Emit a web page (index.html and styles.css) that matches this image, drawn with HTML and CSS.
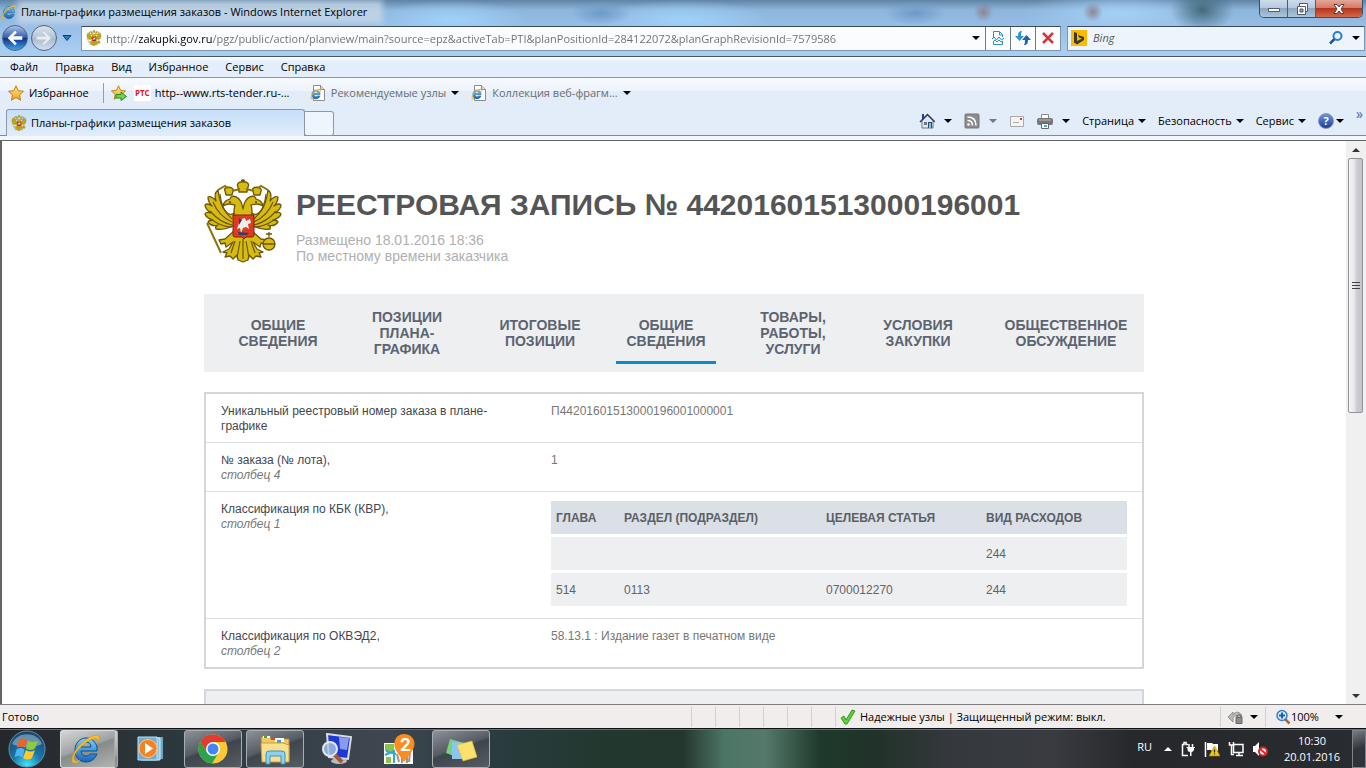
FILE: index.html
```html
<!DOCTYPE html>
<html lang="ru">
<head>
    <meta charset="UTF-8">
    <meta name="viewport" content="width=device-width, initial-scale=1.0">
    <title>Планы-графики размещения заказов</title>
    <link rel="stylesheet" href="styles.css">
</head>
<body>
    <svg class="sprite" aria-hidden="true">
        <defs>
            <linearGradient id="gold" x1="0" y1="0" x2="0" y2="1">
                <stop offset="0" stop-color="#ffe98a"/><stop offset="1" stop-color="#f0a11c"/>
            </linearGradient>
            <linearGradient id="blue" x1="0" y1="0" x2="0" y2="1">
                <stop offset="0" stop-color="#7fd0f7"/><stop offset="1" stop-color="#1565b8"/>
            </linearGradient>
            <symbol id="ie" viewBox="0 0 32 32">
                <path d="M27 18H11c0 3 2 5 5 5 2 0 3-1 4-2h7c-2 5-6 8-11 8C9 29 5 24 5 17S10 5 16 5s12 5 11 13zM11 14h10c0-3-2-5-5-5s-5 2-5 5z" fill="url(#blue)" stroke="#0d4c92" stroke-width="1"/>
                <path d="M6 30C-2 31 3 18 12 10S31-1 29 7c0 1-1 3-2 4 2-5 0-7-4-5C13 9 2 22 4 27c1 2 4 1 6 0-1 1-2 3-4 3z" fill="#fbc02d" stroke="#d9920c" stroke-width=".6"/>
            </symbol>
            <symbol id="ie-page" viewBox="0 0 16 16">
                <path d="M3.500.5h7l4 4v11h-11z" fill="#fff" stroke="#8c8c8c"/>
                <path d="M10.500.5v4h4" fill="#ddd" stroke="#8c8c8c"/>
                <use href="#ie" x="0" y="3" width="12" height="12"/>
            </symbol>
            <symbol id="eagle" viewBox="0 0 78 84">
                <g fill="#d8bb10" stroke="#6b5708" stroke-width="1.300" stroke-linejoin="round">
                    <path d="M30 34C25 38 17 33 14 11c-4 3-3 8-2 11-4-5-6-5-8-4 0 4 2 7 4 9-4-3-6-2-7-1 0 4 3 6 6 8-3-1-5-1-6 1 1 4 5 5 8 6-3 0-4 0-5 2 3 4 7 4 10 3-2 1-3 2-2 4 6 1 14-1 20-5z"/>
                    <path d="M48 34c5 4 13-1 16-23 4 3 3 8 2 11 4-5 6-5 8-4 0 4-2 7-4 9 4-3 6-2 7-1 0 4-3 6-6 8 3-1 5-1 6 1-1 4-5 5-8 6 3 0 4 0 5 2-3 4-7 4-10 3 2 1 3 2 2 4-6 1-14-1-20-5z"/>
                    <path d="M31 39c-2-7-1-10 0-13-4-1-7-2-12 1 1-5 4-6 7-7 1-5 11-4 13 10 2-14 12-15 13-10 3 1 6 2 7 7-5-3-8-2-12-1 1 3 2 6 0 13z"/>
                    <path d="M30 52l-9 8-6 1 2 4 4-1 1 4 7-5-4 7-6 3 4 1-2 4 5-1 3 3 4-4 1 5 5 2 5-2 1-5 4 4 3-3 5 1-2-4 4-1-6-3-4-7 7 5 1-4 4 1 2-4-6-1-9-8z"/>
                    <path d="M34 8c-4-7 14-7 10 0l-1 5h-8zM21 12c-3-5 10-5 8 0l-1 4h-6zM49 12c-3-5 10-5 8 0l-1 4h-6z"/>
                    <circle cx="65" cy="65" r="6"/>
                    <path d="M59 65h12M65 58v-5M62 55h6M39 3V0M37 1.500h4"/>
                </g>
                <path d="M3 44l14 30M14 11l7-4 3 2M64 11l-7-4-3 2M36 10l-8 2M42 10l8 2" fill="none" stroke="#8d7514" stroke-width="2"/>
                <path d="M16 15c1 12 5 19 12 25M9 23c4 10 10 16 19 20M6 32c6 7 13 12 22 14M8 41c6 4 12 7 20 7M62 15c-1 12-5 19-12 25M69 23c-4 10-10 16-19 20M72 32c-6 7-13 12-22 14M70 41c-6 4-12 7-20 7M31 62l-4 12M36 62l-3 17M42 62l3 17M47 62l4 12M39 60v20" fill="none" stroke="#6b5708" stroke-width="1.200"/>
                <path d="M29 36h21v20q0 2-2 2h-6l-2 2-2-2h-7q-2 0-2-2z" fill="#df3b22" stroke="#7e2211"/>
                <path d="M33 50l2-6 3-4 3-1 1 3 4-2 1 4-3 1 1 5-3-2-3 1-2 5-1-5z" fill="#eee"/>
                <path d="M34 53l11 1-2 2h-8zM35 39l3 2-3 5z" fill="#27445c"/>
                <circle cx="26" cy="23" r="1" fill="#4b3b02"/><circle cx="52" cy="23" r="1" fill="#4b3b02"/>
            </symbol>
            <symbol id="star" viewBox="0 0 16 16">
                <path d="M8 .8l2.200 4.900 5.300.6-4 3.600 1.100 5.300L8 12.500l-4.600 2.700 1.100-5.300-4-3.600 5.300-.6z" fill="url(#gold)" stroke="#c67c10"/>
            </symbol>
        </defs>
    </svg>

    <header class="browser">
        <div class="titlebar">
            <svg class="icon"><use href="#ie"/></svg>
            <span class="window-title">Планы-графики размещения заказов - Windows Internet Explorer</span>
            <div class="window-buttons">
                <button aria-label="Свернуть"><svg viewBox="0 0 14 12"><path d="M1.500 5.500h11v3h-11z" fill="#fff" stroke="#4d5c6e"/></svg></button>
                <button aria-label="Восстановить"><svg viewBox="0 0 14 12"><path d="M4.500.5h8v8h-2v3h-8v-8h2z" fill="#fff" stroke="#4d5c6e"/><path d="M5 6h3v3H5z" fill="#8ba1b8" stroke="#4d5c6e"/><path d="M4.500 3.500h6v5" fill="none" stroke="#4d5c6e"/></svg></button>
                <button class="close" aria-label="Закрыть"><svg viewBox="0 0 14 12"><path d="M2 1.500h3l2 2.500 2-2.500h3L9 6l3 4.500H9L7 8l-2 2.500H2L5 6z" fill="#fff" stroke="#5b3a3a"/></svg></button>
            </div>
        </div>

        <div class="address-row">
            <button class="nav-btn back" aria-label="Назад"><svg viewBox="0 0 24 24"><path d="M4 12l8-8 2 2-4 4h10v4H10l4 4-2 2z" fill="#fff"/></svg></button>
            <button class="nav-btn forward" aria-label="Вперед"><svg viewBox="0 0 24 24"><path d="M20 12l-8-8-2 2 4 4H4v4h10l-4 4 2 2z" fill="#e8eef4" stroke="#c3cdd7"/></svg></button>
            <button class="history" aria-label="Последние страницы"><svg viewBox="0 0 10 6"><path d="M1 .5h8l-4 5z" fill="#2a7fc0" stroke="#123e74"/></svg></button>
            <div class="address">
                <svg class="icon"><use href="#eagle"/></svg>
                <input class="url" type="text" aria-label="Адрес" value="http://zakupki.gov.ru/pgz/public/action/planview/main?source=epz&amp;activeTab=PTI&amp;planPositionId=284122072&amp;planGraphRevisionId=7579586">
                <button class="drop" aria-label="Список адресов"><i class="caret"></i></button>
                <button class="cell" aria-label="Режим совместимости"><svg class="icon" viewBox="0 0 16 16"><path d="M3.500 7V1.500h6l3 3V7M3.500 11v3.500h9V11M9.500 2v3h3" fill="none" stroke="#2a91c4"/><path d="M2 9l2-2 2.500 3L9 7l2.500 3L14 8M3 12l2-2 2 2 2-2 2 2 2-1" fill="none" stroke="#2a91c4"/></svg></button>
                <button class="cell" aria-label="Обновить"><svg class="icon" viewBox="0 0 16 16"><path d="M7 1C4 1 3 3 3 6H0l4.500 5L9 6H6c0-2 0-3 1-5z" fill="#2b94d4"/><path d="M9 15c3 0 4-2 4-5h3l-4.500-5L7 10h3c0 2 0 3-1 5z" fill="#1b64ac"/></svg></button>
                <button class="cell" aria-label="Остановить"><svg class="icon" viewBox="0 0 16 16"><path d="M3 3l10 10M13 3L3 13" stroke="#d0393b" stroke-width="2.500"/></svg></button>
            </div>
            <div class="search">
                <svg class="icon" viewBox="0 0 16 16"><path d="M0 0h16v16H0z" fill="#ffb900"/><path d="M3 2l3 1v8l5-2.500-3-1L7 5l6 2v3l-7 4.500-3-2z" fill="#3a3a3a"/></svg>
                <input type="text" aria-label="Поиск" placeholder="Bing">
                <button aria-label="Найти"><svg class="icon" viewBox="0 0 16 16"><circle cx="9.500" cy="6" r="4" fill="#e6f4fc" stroke="#2c7dcc" stroke-width="2"/><path d="M6.500 9L2 13.500" stroke="#1c57a3" stroke-width="2.500"/></svg></button>
                <button aria-label="Поставщики поиска"><i class="caret"></i></button>
            </div>
        </div>

        <nav class="menubar">
            <button>Файл</button>
            <button>Правка</button>
            <button>Вид</button>
            <button>Избранное</button>
            <button>Сервис</button>
            <button>Справка</button>
        </nav>

        <div class="favbar">
            <button class="favorites"><svg class="icon"><use href="#star"/></svg>Избранное</button>
            <button class="add-fav" aria-label="Добавить в избранное"><svg class="icon" viewBox="0 0 16 16"><use href="#star" width="15" height="15"/><path d="M5 9.500h5V7l5.500 4.500-5.500 4V13H5z" fill="#6bd34c" stroke="#2b8c21"/></svg></button>
            <a class="rts" href="#"><b>РТС</b>http--www.rts-tender.ru-...</a>
            <button class="muted"><svg class="icon"><use href="#ie-page"/></svg>Рекомендуемые узлы<i class="caret"></i></button>
            <button class="muted"><svg class="icon"><use href="#ie-page"/></svg>Коллекция веб-фрагм...<i class="caret"></i></button>
        </div>

        <div class="tabrow">
            <button class="tab"><svg class="icon"><use href="#eagle"/></svg>Планы-графики размещения заказов</button>
            <button class="new-tab" aria-label="Создать вкладку"></button>
            <div class="commands">
                <button class="split" aria-label="Домой"><svg class="icon" viewBox="0 0 16 16"><path d="M3 1h2v5H3z" fill="#2338b0"/><path d="M3 7.500L8.500 2 14 7.500V15H3z" fill="#e3e6ea" stroke="#6e7681"/><path d="M1 9l7.500-7.500L16 9" fill="none" stroke="#2c3a66" stroke-width="1.500"/><path d="M5 9h3v3H5z" fill="#6a7688"/><path d="M9 9h4v6H9z" fill="#2c4770"/><path d="M10 10h2v5h-2z" fill="#7ec0ec"/></svg><i class="caret"></i></button>
                <button class="split" aria-label="Веб-каналы"><svg class="icon" viewBox="0 0 16 16"><rect x="1" y="1" width="14" height="14" rx="1" fill="#8b8b8b" stroke="#777"/><circle cx="4.500" cy="11.500" r="1.300" fill="#fff"/><path d="M3.500 7.500q5 0 5 5M3.500 4q8.500 0 8.500 8.500" fill="none" stroke="#fff" stroke-width="1.500"/></svg><i class="caret pale"></i></button>
                <button aria-label="Почта"><svg class="icon" viewBox="0 0 16 16"><path d="M1.500 3.500h13v10h-13z" fill="#f4f4f4" stroke="#a9a9a9"/><path d="M11 5h2v2h-2z" fill="#d33"/><path d="M4 9.500h6" stroke="#aaa"/></svg></button>
                <button class="split" aria-label="Печать"><svg class="icon" viewBox="0 0 16 16"><path d="M4.500 1.500h7v4h-7z" fill="#fff" stroke="#888"/><rect y="5" width="16" height="7" rx="2" fill="#777"/><path d="M2 7h12" stroke="#bbb"/><path d="M4.500 10.500h7v5h-7z" fill="#fff" stroke="#666"/><path d="M7 12h3v2H7z" fill="#54a8c9"/></svg><i class="caret"></i></button>
                <button class="cmd">Страница<i class="caret"></i></button>
                <button class="cmd">Безопасность<i class="caret"></i></button>
                <button class="cmd">Сервис<i class="caret"></i></button>
                <button class="help" aria-label="Справка"><b>?</b><i class="caret"></i></button>
                <button class="more" aria-label="Другие команды">»</button>
            </div>
        </div>
    </header>

    <div class="viewport">
        <main class="page">
            <div class="record-head">
                <svg class="emblem"><use href="#eagle"/></svg>
                <div>
                    <h1>РЕЕСТРОВАЯ ЗАПИСЬ № 44201601513000196001</h1>
                    <p>Размещено 18.01.2016 18:36<br>По местному времени заказчика</p>
                </div>
            </div>

            <nav class="record-tabs">
                <a href="#">ОБЩИЕ<br>СВЕДЕНИЯ</a>
                <a href="#">ПОЗИЦИИ<br>ПЛАНА-<br>ГРАФИКА</a>
                <a href="#">ИТОГОВЫЕ<br>ПОЗИЦИИ</a>
                <a href="#" class="active">ОБЩИЕ<br>СВЕДЕНИЯ</a>
                <a href="#">ТОВАРЫ,<br>РАБОТЫ,<br>УСЛУГИ</a>
                <a href="#">УСЛОВИЯ<br>ЗАКУПКИ</a>
                <a href="#">ОБЩЕСТВЕННОЕ<br>ОБСУЖДЕНИЕ</a>
            </nav>

            <table class="details">
                <tr>
                    <th>Уникальный реестровый номер заказа в плане-графике</th>
                    <td>П44201601513000196001000001</td>
                </tr>
                <tr>
                    <th>№ заказа (№ лота),<br><em>столбец 4</em></th>
                    <td>1</td>
                </tr>
                <tr>
                    <th>Классификация по КБК (КВР),<br><em>столбец 1</em></th>
                    <td>
                        <table class="codes">
                            <thead>
                                <tr><th>ГЛАВА</th><th>РАЗДЕЛ (ПОДРАЗДЕЛ)</th><th>ЦЕЛЕВАЯ СТАТЬЯ</th><th>ВИД РАСХОДОВ</th></tr>
                            </thead>
                            <tbody>
                                <tr><td></td><td></td><td></td><td>244</td></tr>
                                <tr><td>514</td><td>0113</td><td>0700012270</td><td>244</td></tr>
                            </tbody>
                        </table>
                    </td>
                </tr>
                <tr>
                    <th>Классификация по ОКВЭД2,<br><em>столбец 2</em></th>
                    <td>58.13.1 : Издание газет в печатном виде</td>
                </tr>
            </table>

            <div class="next-block"></div>
        </main>
        <div class="scrollbar">
            <button aria-label="Вверх"><i class="arrow up"></i></button>
            <div class="thumb"><i></i><i></i><i></i></div>
            <button class="down" aria-label="Вниз"><i class="arrow"></i></button>
        </div>
    </div>

    <footer class="statusbar">
        <span class="ready">Готово</span>
        <div class="panes"><i></i><i></i><i></i><i></i><i></i><i></i></div>
        <div class="zone">
            <svg class="icon" viewBox="0 0 16 16"><path d="M1 9l3-2 2 4 6-10 3 1-8 13H5z" fill="#5fd13c" stroke="#2e9a20"/></svg>
            Надежные узлы | Защищенный режим: выкл.
        </div>
        <button class="privacy" aria-label="Конфиденциальность"><svg class="icon" viewBox="0 0 16 16"><path d="M0 8l5-5v3c2-4 8-4 9 2l-3 1C10 6 7 6 5 9v4z" fill="#b9b9b9" stroke="#909090"/><path d="M9 8.500V7q2-2.500 4 0v1.500" fill="none" stroke="#777" stroke-width="1.500"/><path d="M8 8.500h6v6H8z" fill="#8c8c8c" stroke="#666"/></svg><i class="caret"></i></button>
        <button class="zoom"><svg class="icon" viewBox="0 0 16 16"><path d="M10 10l4.500 4.500" stroke="#a66b34" stroke-width="2.500"/><circle cx="7" cy="6.500" r="5" fill="#d5edfb" stroke="#3b7cc0" stroke-width="1.500"/><path d="M7 3.500v6M4 6.500h6" stroke="#1c5fb4" stroke-width="2"/></svg>100%<i class="caret"></i></button>
    </footer>

    <div class="taskbar">
        <button class="start" aria-label="Пуск">
            <svg viewBox="0 0 38 38">
                <defs><radialGradient id="orb" cx=".5" cy=".95" r=".9"><stop offset="0" stop-color="#3ee6ff"/><stop offset=".45" stop-color="#1977ac"/><stop offset="1" stop-color="#1b466c"/></radialGradient></defs>
                <circle cx="19" cy="19" r="18" fill="url(#orb)" stroke="#6f8da3"/>
                <path d="M4 14C9 1 29 1 34 14 27 18 11 18 4 14z" fill="#a4c4d6" opacity=".55"/>
                <path d="M11 10c3-2 5-2 8 0l-2 8c-3-2-5-2-8 0z" fill="#f0602a"/>
                <path d="M20 10.500c3 2 6 2 10 0l-3 8c-3 2-6 2-9 0z" fill="#92c83d"/>
                <path d="M8.500 19.500c3-2 5-2 8 0l-2 8c-3-2-5-2-8 0z" fill="#4fb3f0"/>
                <path d="M18 20c3 2 6 2 9 0l-3 8c-3 2-6 2-9 0z" fill="#ffc928"/>
            </svg>
        </button>
        <button class="task current" aria-label="Internet Explorer"><svg viewBox="0 0 32 32"><use href="#ie"/></svg></button>
        <button class="task plain" aria-label="Проигрыватель">
            <svg viewBox="0 0 32 32"><path d="M8 4h20v22H8z" fill="#6fa5c4"/><path d="M6 5h19v22H6z" fill="#8fc3df" stroke="#d2edfa"/><path d="M3 4h19v23H3z" fill="#74acd0" stroke="#b8e1f5"/><circle cx="13" cy="15.500" r="9" fill="#f5821f" stroke="#fbc893"/><path d="M10 10l8 5.500-8 5.500z" fill="#fff"/></svg>
        </button>
        <button class="task open" aria-label="Chrome">
            <svg viewBox="0 0 32 32"><circle cx="16" cy="16" r="14.500" fill="#fcc934"/><path d="M3.400 8.700A14.500 14.500 0 0 0 15 30.500L22 19 16 16l-6 3z" fill="#2ba24c"/><path d="M3.400 8.700L10 19l6-10h12.600A14.500 14.500 0 0 0 3.400 8.700z" fill="#e33b2e"/><circle cx="16" cy="16" r="7" fill="#fff"/><circle cx="16" cy="16" r="5.500" fill="#4285f4"/></svg>
        </button>
        <button class="task open" aria-label="Проводник">
            <svg viewBox="0 0 32 32"><path d="M2 5l2-2h6l2 3h18v22H4z" fill="#edc965" stroke="#b68d2e"/><path d="M4 3h7v2H4zM16 5h9v4h-9z" fill="#fff"/><path d="M5 3h3v2H5z" fill="#36a84a"/><path d="M12 5h4v2h-4z" fill="#d44b2b"/><path d="M18 7h4v3h-4z" fill="#3a9be0"/><path d="M2 10h22l6 2v17H3z" fill="#f9e08b" stroke="#c99f3b"/><path d="M7 31V21q0-3 3-3h13q3 0 3 3v10h-4v-8H11v8z" fill="#8ed0ef" stroke="#3e92bf"/></svg>
        </button>
        <button class="task plain" aria-label="Поиск компьютера">
            <svg viewBox="0 0 32 32"><ellipse cx="18" cy="28" rx="8" ry="3" fill="#b8bcc0"/><path d="M6 1l24 3-3 22-19-2z" fill="#1d38d5" stroke="#d9dde2" stroke-width="2"/><path d="M18 4l10 1-2 12-7-1z" fill="#b7c6ff" opacity=".7"/><circle cx="9" cy="16" r="7" fill="#a9c5e5" fill-opacity=".8" stroke="#dfe9f3" stroke-width="2"/><path d="M14 22l7 7" stroke="#9c5b37" stroke-width="4"/></svg>
        </button>
        <button class="task plain" aria-label="2ГИС">
            <svg viewBox="0 0 32 32"><path d="M1 10h29v21H1z" fill="#fafafa"/><path d="M2 11h9v7H2zM3 24h5v6H3z" fill="#8bc34a"/><path d="M2 22l9-4v12M3 18l10 3" stroke="#28a9df" stroke-width="2" fill="none"/><path d="M14 21l2 8M19 22v8M24 20v10M27 18l-1 11" stroke="#a59481" stroke-width="2"/><path d="M21 29l-7-10C8 10 13 1 21 1s14 8 8 17z" fill="#fa8d20"/><text x="17" y="18" class="gis">2</text></svg>
        </button>
        <button class="task open" aria-label="Записки">
            <svg viewBox="0 0 32 32"><path d="M5 6l14 4-5 15L1 20z" fill="#79d277"/><path d="M7 9l15 1v16H7z" fill="#8bc6f2"/><path d="M12 12l15-4 5 16-14 4z" fill="#fbe16d" stroke="#e0b93e" stroke-width=".6"/></svg>
        </button>

        <div class="tray">
            <button class="lang">RU</button>
            <button aria-label="Скрытые значки"><i class="arrow up light"></i></button>
            <button aria-label="Питание"><svg class="icon" viewBox="0 0 16 16"><path d="M8 3.500H6V1.500H4v2H2.500v11H8" fill="none" stroke="#fff" stroke-width="1.500"/><path d="M9 3v3M12.500 3v3" stroke="#fff" stroke-width="1.500"/><path d="M6.500 6h8.500v1h-1v2q-1 2-2.500 2v4h-1.500v-4Q8 11 7.500 9V7h-1z" fill="#fff"/></svg></button>
            <button aria-label="Центр поддержки"><svg class="icon" viewBox="0 0 16 16"><path d="M1.500 1v15" stroke="#fff" stroke-width="1.500"/><path d="M3 2h5l1 1h5v7H8L7 9H3z" fill="#fff"/><path d="M10.500 5l5.500 10H5z" fill="#f5c915" stroke="#a98000" stroke-width=".6"/><path d="M10.500 8.500v3M10.500 12.500v1" stroke="#222" stroke-width="1.300"/></svg></button>
            <button aria-label="Сеть"><svg class="icon" viewBox="0 0 16 16"><path d="M5.500 3.500h9.500v8H5.500zM8 14.500h7M11 12v2" fill="#2b2f33" stroke="#fff" stroke-width="1.500"/><path d="M1.500 1v3h4V1M3.500 4v9.500H6" fill="none" stroke="#fff" stroke-width="1.500"/></svg></button>
            <button aria-label="Громкость"><svg class="icon" viewBox="0 0 16 16"><path d="M1 5h2l4-4v14l-4-4H1z" fill="#fff"/><circle cx="11" cy="10.500" r="4" fill="#fff" stroke="#dd2424" stroke-width="2"/><path d="M8 8l6 5" stroke="#dd2424" stroke-width="2"/></svg></button>
            <button class="clock">10:30<br>20.01.2016</button>
            <button class="desktop" aria-label="Свернуть все окна"></button>
        </div>
    </div>
</body>
</html>
```
FILE: styles.css
```css
*{
    margin: 0;
    padding: 0;
    box-sizing: border-box;
}
body{
    height: 100vh;
    display: flex;
    flex-direction: column;
    overflow: hidden;
    background-color: #fff;
    font-family: "Open Sans", "Noto Sans", sans-serif;
    font-size: 11px;
    line-height: 16px;
    color: #000;
}
button, input{
    border: none;
    background: none;
    font: inherit;
    color: inherit;
}
button{
    display: flex;
    align-items: center;
    justify-content: center;
    flex-shrink: 0;
    white-space: nowrap;
}
a{
    color: inherit;
    text-decoration: none;
}
.sprite{
    position: absolute;
    width: 0;
    height: 0;
}
.icon{
    width: 16px;
    height: 16px;
    flex-shrink: 0;
}
.caret{
    border: 4px solid transparent;
    border-top-color: #000;
    border-bottom: none;
}
.caret.pale{
    border-top-color: #777;
}
.arrow{
    border: 4px solid transparent;
    border-top-color: #333;
    border-bottom: none;
}
.arrow.up{
    border: 4px solid transparent;
    border-bottom-color: #333;
    border-top: none;
}
.arrow.light{
    border-bottom-color: #fff;
}

/* window frame */
.browser{
    flex-shrink: 0;
    background: radial-gradient(ellipse 10px 10px at 72% 12px, #8d8593, transparent),
        radial-gradient(ellipse 10px 10px at 80% 12px, #8d8593, transparent),
        radial-gradient(ellipse 32px 22px at 88% 10px, #426a7c, transparent),
        radial-gradient(ellipse 30px 12px at 44% 13px, #6c9bc6, transparent),
        radial-gradient(ellipse 30px 12px at 67% 13px, #6c9bc6, transparent),
        radial-gradient(ellipse 100px 24px at 82% 14px, #a5d0f6, transparent),
        radial-gradient(ellipse 90px 20px at 50% 20px, #9fd2fa, transparent),
        radial-gradient(ellipse 80px 20px at 33% 20px, #9fd2fa, transparent),
        linear-gradient(#5f84a6, #8eb5dc 10px, #94bce4 24px, #a9cdf0 50px);
}
.titlebar{
    height: 24px;
    padding-left: 1px;
    display: flex;
    align-items: center;
    gap: 4px;
}
.window-title{
    padding-right: 12px;
    line-height: 16px;
    background-color: rgb(205,219,232,0.7);
    box-shadow: 0 0 6px 4px rgb(205,219,232,0.7);
}
.window-buttons{
    margin-left: auto;
    margin-right: 3px;
    align-self: flex-start;
    display: flex;
    border: 1px solid #3c4f63;
    border-top: none;
    border-radius: 0 0 5px 5px;
    overflow: hidden;
}
.window-buttons button{
    width: 28px;
    height: 17px;
    border-right: 1px solid #4b5d70;
    background: linear-gradient(#cddcea, #b4c8dc 8px, #8ca6c0 8px, #adc4da);
}
.window-buttons svg{
    width: 14px;
    height: 12px;
}
.window-buttons .close{
    width: 46px;
    border-right: none;
    background: linear-gradient(#e4a799, #d37967 8px, #b5301a 8px, #d2694a);
}
.address-row{
    height: 33px;
    padding: 0 1px 4px 2px;
    display: flex;
    align-items: center;
    border-bottom: 1px solid #47566b;
}
.nav-btn{
    width: 26px;
    height: 26px;
    border-radius: 50%;
    border: 1px solid #53667d;
}
.nav-btn svg{
    width: 22px;
    height: 22px;
}
.back{
    background: linear-gradient(#a9c3ea, #2a58ab 50%, #0c2f85 50%, #41a3ec);
}
.forward{
    margin-left: 3px;
    background: linear-gradient(#d9e3ee, #b4c4d6 50%, #a7b9cd 50%, #d3e0ed);
}
.history{
    width: 20px;
    margin-right: 4px;
}
.history svg{
    width: 10px;
    height: 6px;
}
.address, .search{
    height: 25px;
    display: flex;
    align-items: center;
    border: 1px solid #8196ad;
    border-top-color: #3c4b5c;
    background-color: #fafcfe;
}
.address{
    flex: 1;
    min-width: 0;
    padding-left: 4px;
}
.url{
    flex: 1;
    min-width: 0;
    height: 22px;
    margin-left: 4px;
    color: transparent;
    background: linear-gradient(90deg, #6d6d6d 33px, #000 33px, #000 107px, #6d6d6d 107px);
    background-clip: text;
    -webkit-background-clip: text;
}
.drop{
    width: 18px;
}
.cell{
    width: 25px;
    height: 23px;
    border-left: 1px solid #6b7b8c;
}
.search{
    width: 298px;
    margin-left: 6px;
    padding: 0 4px 0 3px;
    background-color: #edf4fc;
}
.search input{
    flex: 1;
    min-width: 0;
    margin-left: 6px;
    font-style: italic;
}
.search input::placeholder{
    color: #555;
}
.search button{
    margin-left: 8px;
}
.menubar{
    height: 21px;
    padding-left: 10px;
    display: flex;
    gap: 17px;
    border-bottom: 1px solid #8e98a4;
    background: linear-gradient(#fdfeff, #e3eefa 5px);
}
.favbar{
    height: 30px;
    padding-left: 8px;
    display: flex;
    align-items: center;
    background: linear-gradient(#f7fafe, #edf3fc 13px, #e2edf9 13px);
}
.favbar button{
    gap: 5px;
}
.favbar .favorites{
    height: 20px;
    padding-right: 14px;
    border-right: 1px solid #9b9b9b;
}
.add-fav{
    margin-left: 7px;
}
.rts{
    width: 164px;
    margin-left: 7px;
    display: flex;
    align-items: center;
    gap: 4px;
}
.rts b{
    width: 17px;
    background-color: #fff;
    color: #e3122e;
    font-size: 8px;
    text-align: center;
}
.muted{
    margin-left: 12px;
    color: #6d6d6d;
}
.tabrow{
    height: 32px;
    padding-left: 6px;
    display: flex;
    align-items: flex-start;
    background: linear-gradient(#e2edf9 27px, #808b99 27px, #808b99 28px, #f2f7fd 28px);
}
.tab{
    width: 299px;
    height: 27px;
    margin-top: 1px;
    padding-left: 4px;
    justify-content: flex-start;
    gap: 4px;
    border: 1px solid #8e98a4;
    border-bottom: none;
    border-radius: 3px 3px 0 0;
    background: linear-gradient(#c5dffb, #e2edf9);
}
.new-tab{
    width: 29px;
    height: 25px;
    margin-top: 3px;
    border: 1px solid #8e98a4;
    border-left: none;
    border-radius: 0 3px 3px 3px;
    background-color: #eef5fc;
}
.commands{
    height: 26px;
    margin-left: auto;
    display: flex;
    align-items: center;
    gap: 12px;
}
.split{
    gap: 9px;
}
.cmd{
    gap: 4px;
}
.help{
    gap: 2px;
}
.help b{
    width: 16px;
    border: 1px solid #8794ab;
    border-radius: 50%;
    background: linear-gradient(#6b95dd, #1b3f9c);
    color: #fff;
    line-height: 14px;
}
.more{
    align-self: flex-start;
    padding-right: 3px;
    color: #4a5fae;
    font-size: 14px;
    line-height: 12px;
}

/* document area */
.viewport{
    flex: 1;
    min-height: 0;
    display: flex;
    border: 1px solid #646464;
    border-width: 1px 0 0 2px;
    overflow: hidden;
}
.page{
    width: 940px;
    margin: 0 auto;
    padding-top: 38px;
    font-family: "Liberation Sans", Arial, sans-serif;
    font-size: 12px;
    line-height: 15px;
    color: #777;
}
.record-head{
    display: flex;
    gap: 14px;
}
.emblem{
    width: 78px;
    height: 84px;
}
.record-head h1{
    padding-top: 8px;
    color: #555;
    font-size: 30px;
    line-height: 36px;
}
.record-head p{
    margin-top: 9px;
    color: #b0b0b0;
    font-size: 14px;
    line-height: 16px;
}
.record-tabs{
    height: 78px;
    margin: 30px 0 20px;
    padding: 8px 0 8px 24px;
    display: grid;
    grid-template-columns: 100fr 158fr 108fr 144fr 110fr 140fr 156fr;
    justify-items: center;
    background-color: #eeeff1;
    color: #5b6470;
    font-size: 14px;
    font-weight: bold;
    line-height: 16px;
    text-align: center;
}
.record-tabs a{
    padding: 0 10px;
    display: flex;
    align-items: center;
    border: 3px solid transparent;
    border-width: 3px 0;
}
.record-tabs .active{
    border-bottom-color: #088ccc;
}
.details{
    width: 100%;
    border: 2px solid #d3d6db;
    border-spacing: 0;
    table-layout: fixed;
}
.details th, .details td{
    padding: 10px 15px 8px;
    text-align: left;
    vertical-align: top;
}
.details th{
    width: 330px;
    color: #434750;
    font-weight: normal;
}
.details em{
    color: #777;
}
.details > tbody > tr + tr > *{
    border-top: 1px solid #dcdee1;
}
.details .codes{
    width: 100%;
    margin: -4px 0 1px;
    border-spacing: 0 3px;
    table-layout: fixed;
    color: #606468;
}
.details .codes th, .details .codes td{
    height: 33px;
    padding: 10px 5px 8px;
    border: none;
    background-color: #eeeff1;
}
.details .codes th{
    width: 68px;
    background-color: #dbe0e7;
    color: #5c5f64;
    font-weight: bold;
}
.details .codes th:nth-child(2){
    width: 202px;
}
.details .codes th:nth-child(3){
    width: 160px;
}
.details .codes th:nth-child(4){
    width: auto;
}
.next-block{
    height: 60px;
    margin-top: 20px;
    border: 2px solid #d3d6db;
    background-color: #eeeff1;
}
.scrollbar{
    width: 20px;
    flex-shrink: 0;
    padding: 0 3px 0 2px;
    display: flex;
    flex-direction: column;
    background-color: #f0f0f0;
}
.scrollbar button{
    height: 17px;
}
.scrollbar .down{
    margin-top: auto;
}
.thumb{
    height: 255px;
    display: flex;
    flex-direction: column;
    align-items: center;
    justify-content: center;
    gap: 1px;
    border: 1px solid #909499;
    border-radius: 2px;
    background: linear-gradient(90deg, #f6f6f6, #e6e6e8 45%, #cfcfd4 55%, #c2c3ca);
}
.thumb i{
    width: 8px;
    height: 2px;
    border-top: 1px solid #444;
}

/* status line */
.statusbar{
    height: 24px;
    flex-shrink: 0;
    padding-top: 2px;
    display: flex;
    align-items: center;
    background: linear-gradient(#7d7d7d 1px, #f1eded 1px);
}
.ready{
    flex: 1;
    padding-left: 2px;
}
.panes{
    height: 20px;
    display: flex;
}
.panes i{
    width: 24px;
    border-left: 1px solid #d3d0d0;
}
.zone{
    width: 385px;
    height: 20px;
    padding-left: 4px;
    display: flex;
    align-items: center;
    gap: 4px;
    border-left: 1px solid #d3d0d0;
}
.statusbar button{
    height: 20px;
    border-left: 1px solid #d3d0d0;
}
.privacy{
    width: 45px;
    gap: 6px;
}
.zoom{
    width: 101px;
    padding-left: 9px;
    justify-content: flex-start;
}
.zoom .caret{
    margin-left: 16px;
}

/* taskbar */
.taskbar{
    height: 40px;
    flex-shrink: 0;
    padding-left: 8px;
    display: flex;
    align-items: center;
    border-top: 1px solid #0d1114;
    box-shadow: inset 0 1px #5c7182;
    background: linear-gradient(90deg, #24282d, #2c3136 8%, #2b393c 13%, #3f4650 28%, #2a3c40 36%, #22382f 44%, #24362e 50%, #4c7565 53%, #55796b 56%, #1e3a2c 60%, #213229 64%, #35393e 70%, #393b41 77%, #26282b 83%, #292c30);
}
.start svg{
    width: 38px;
    height: 38px;
}
.start{
    margin-right: 14px;
}
.task{
    width: 58px;
    height: 38px;
    margin-right: 4px;
    border-radius: 3px;
}
.task svg{
    width: 32px;
    height: 32px;
}
.task.open{
    border: 1px solid #a7adb2;
    background: linear-gradient(160deg, #8c9298, #565c63 45%, #3f454c 50%, #565c62);
}
.task.current{
    padding-right: 4px;
    border: 1px solid #d9dcdc;
    border-right: 4px double #a5aba9;
    background: linear-gradient(160deg, #d5d6d6, #a0a3a4 45%, #868b8b 50%, #b0b5b3);
}
.gis{
    font-family: Roboto, sans-serif;
    font-size: 19px;
    font-weight: bold;
    fill: #fff;
}
.tray{
    height: 100%;
    margin-left: auto;
    display: flex;
    align-items: center;
    gap: 8px;
    color: #fff;
}
.lang{
    margin-right: 4px;
    padding-bottom: 4px;
}
.clock{
    width: 64px;
    margin-left: 4px;
}
.desktop{
    width: 14px;
    height: 38px;
    border: 1px solid #7c838a;
    background: linear-gradient(160deg, #777c82, #30343a 50%);
}
```
